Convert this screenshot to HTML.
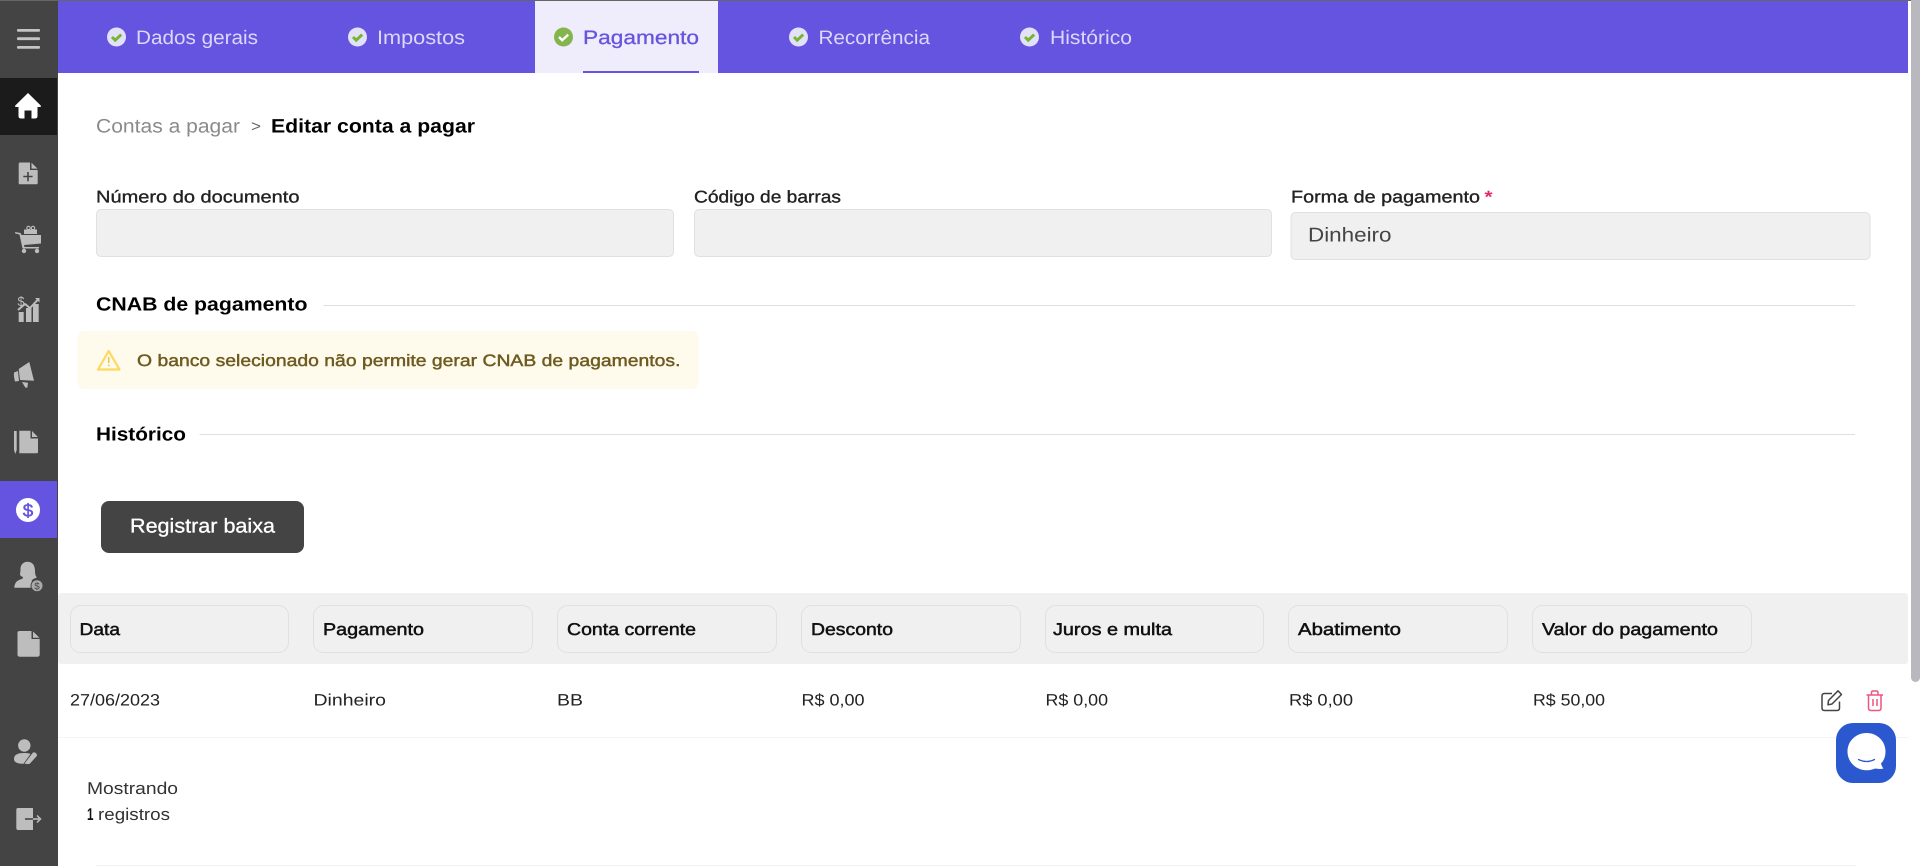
<!DOCTYPE html>
<html lang="pt-BR"><head><meta charset="utf-8"><title>Editar conta a pagar</title>
<style>
html,body{margin:0;padding:0;width:1920px;height:866px;overflow:hidden;background:#fff}
svg{display:block;position:absolute;left:0;top:0}
text{font-family:"Liberation Sans",sans-serif;text-rendering:geometricPrecision;white-space:pre}
.tab{font-size:19.5px;fill:#dcd8fa}
.lab{font-size:17px;fill:#222;stroke:#222;stroke-width:.35}
.h{font-size:19px;fill:#000;font-weight:700}
.th{font-size:17px;fill:#111;stroke:#111;stroke-width:.5}
.td{font-size:16.5px;fill:#222}
.i{fill:#bdbdbd}
</style></head><body>
<svg width="1920" height="866" viewBox="0 0 1920 866" xmlns="http://www.w3.org/2000/svg">
<rect width="1920" height="866" fill="#fff"/>
<!-- sidebar -->
<rect x="0" y="0" width="58" height="866" fill="#444"/>
<rect x="0" y="0" width="1920" height="1" fill="#666"/>
<g fill="#c4c4c4"><rect x="17" y="29" width="23" height="2.8" rx="1"/><rect x="17" y="37.3" width="23" height="2.8" rx="1"/><rect x="17" y="46" width="23" height="2.8" rx="1"/></g>
<rect x="0" y="78" width="57" height="57" fill="#1b1b1b"/>
<path fill="#fff" d="M28 93 L40.6 105.4 Q41.5 107 40 107 H37.5 V116 Q37.5 118.5 35 118.5 H31.5 V110.5 H24.5 V118.5 H21 Q18.5 118.5 18.5 116 V107 H16 Q14.5 107 15.4 105.4 Z"/>
<path class="i" d="M20 162.5 H30 V170 H37.7 V183 Q37.7 184.3 36 184.3 H20 Q18.7 184.3 18.7 183 V164 Q18.7 162.5 20 162.5 Z M31.5 162.7 L37.5 168.6 H31.5 Z"/>
<path fill="#444" d="M27.2 172 h1.6 v3.8 h3.8 v1.5 h-3.8 v3.9 h-1.6 v-3.9 h-3.9 v-1.5 h3.9 Z"/>
<path class="i" d="M15 232 L20.5 233 L21.5 235 H41 V243.5 L24 245 L24.5 247 H39 V248.5 H22.5 L19.5 234.5 L15.3 233.5 Z"/>
<rect class="i" x="24" y="229.5" width="13" height="4.5"/>
<circle cx="28.5" cy="228" r="1.7" fill="none" stroke="#bdbdbd" stroke-width="1.1"/><circle cx="33" cy="228" r="1.7" fill="none" stroke="#bdbdbd" stroke-width="1.1"/>
<circle class="i" cx="24" cy="251" r="2.2"/><circle class="i" cx="37" cy="251" r="2.2"/>
<text x="17.5" y="306" font-size="13.5" fill="#bdbdbd" textLength="7" lengthAdjust="spacingAndGlyphs">$</text>
<path fill="none" stroke="#bdbdbd" stroke-width="2" d="M18 310 L25 304 L30 308 L38.5 299"/>
<path class="i" d="M35 298 H39.5 V302.5 Z"/>
<rect class="i" x="18.7" y="312" width="5" height="10"/><rect class="i" x="26" y="308" width="5.5" height="14"/><rect class="i" x="33" y="304" width="5.7" height="18"/>
<path class="i" d="M18.7 369 L29.3 362 L34 380.7 L20 380 Z M14 372.5 L18 371 L19 381 L15 381.5 Q13.5 377 14 372.5 Z M22 382 L28 382.7 L27.3 387.7 L25.3 387.5 Z"/>
<path class="i" d="M14 431 H16.7 V450 L15.3 454 L14 450 Z"/>
<path class="i" d="M19.3 430.7 H30.5 V438.5 H38 V452 Q38 453.3 36.5 453.3 H19.3 Z M32 431 L37.8 437 H32 Z"/>
<rect x="0" y="481" width="57" height="57" fill="#6554e0"/>
<circle cx="28" cy="510" r="12" fill="#fff"/>
<text x="22.8" y="516.5" font-size="18" fill="#6554e0" stroke="#6554e0" stroke-width=".5" textLength="10.5" lengthAdjust="spacingAndGlyphs">$</text>
<path class="i" d="M27.5 561.7 C33 561.7 35 566 35 571 C35 574 35.5 576 37 577.5 C34 578.5 32 579.5 31.5 581 L33 583 C31 585 31 586.5 32 587.7 H14.3 C14.5 582 18 580 22.5 578.8 L23 577 C21 576.5 20 575.5 20 574 C20.5 572 20.5 570 20.5 568 C21 564 24 561.7 27.5 561.7 Z"/>
<circle cx="37" cy="585.7" r="6" fill="#aaa" stroke="#444" stroke-width="1"/>
<text x="34.2" y="589.5" font-size="10" fill="#444" textLength="5.5" lengthAdjust="spacingAndGlyphs">$</text>
<path class="i" d="M19.5 631 H31.5 V639 H39.7 V654.5 Q39.7 656.7 37.5 656.7 H19.5 Q17.5 656.7 17.5 654.5 V633 Q17.5 631 19.5 631 Z M33 631.5 L39.5 637.7 H33 Z"/>
<circle class="i" cx="24.3" cy="745.5" r="6.2"/>
<path class="i" d="M14 759 C14 754.5 18 753 24 753 C27 753 29 753.3 30.5 754 L23.5 763.7 C18 764 14 762.5 14 759 Z"/>
<path class="i" d="M33 752.5 C35.5 752 37.5 754 36.8 756 L30 763.5 C28.5 764.5 26 764 24.5 763.5 Z"/>
<path class="i" d="M18 808 H33 V830 H18 Q16.3 830 16.3 828 V810 Q16.3 808 18 808 Z"/>
<rect x="25" y="818.2" width="8" height="1.6" fill="#444"/><rect class="i" x="33" y="818.2" width="6" height="1.6"/>
<path fill="none" stroke="#bdbdbd" stroke-width="1.5" d="M37 815.5 L40.5 819 L37 822.5"/>

<!-- tabs -->
<rect x="58" y="1" width="1850" height="72" fill="#6554e0"/>
<rect x="535" y="1" width="183" height="72" fill="#efedfb"/>
<rect x="583" y="71" width="116" height="2" fill="#6554e0"/>
<g id="checks">
<circle cx="116.5" cy="37" r="9.5" fill="#e3e0fa"/><path d="M112 37 l3.2 3.2 l6 -5.6" fill="none" stroke="#75b52f" stroke-width="2.9"/>
<circle cx="357.5" cy="37" r="9.5" fill="#e3e0fa"/><path d="M353 37 l3.2 3.2 l6 -5.6" fill="none" stroke="#75b52f" stroke-width="2.9"/>
<circle cx="563.5" cy="37" r="9.5" fill="#84b44c"/><path d="M559 37 l3.2 3.2 l6 -5.6" fill="none" stroke="#fff" stroke-width="2.4"/>
<circle cx="798.5" cy="37" r="9.5" fill="#e3e0fa"/><path d="M794 37 l3.2 3.2 l6 -5.6" fill="none" stroke="#75b52f" stroke-width="2.9"/>
<circle cx="1029.5" cy="37" r="9.5" fill="#e3e0fa"/><path d="M1025 37 l3.2 3.2 l6 -5.6" fill="none" stroke="#75b52f" stroke-width="2.9"/>
</g>
<text class="tab" x="136" y="44" textLength="122" lengthAdjust="spacingAndGlyphs">Dados gerais</text>
<text class="tab" x="377" y="44" textLength="88" lengthAdjust="spacingAndGlyphs">Impostos</text>
<text class="tab" x="583" y="44" textLength="116" lengthAdjust="spacingAndGlyphs" style="fill:#6554e0;stroke:#6554e0;stroke-width:.3">Pagamento</text>
<text class="tab" x="818.5" y="44" textLength="111.5" lengthAdjust="spacingAndGlyphs">Recorrência</text>
<text class="tab" x="1050" y="44" textLength="82" lengthAdjust="spacingAndGlyphs">Histórico</text>

<!-- breadcrumb -->
<text x="96" y="132.5" font-size="19.5" fill="#8a8a8a" textLength="144" lengthAdjust="spacingAndGlyphs">Contas a pagar</text>
<text x="251" y="131.5" font-size="16" fill="#666" textLength="10" lengthAdjust="spacingAndGlyphs">&gt;</text>
<text x="271" y="132.5" font-size="19.5" font-weight="700" fill="#000" textLength="204" lengthAdjust="spacingAndGlyphs">Editar conta a pagar</text>

<!-- fields -->
<text class="lab" x="96" y="202.5" textLength="203.5" lengthAdjust="spacingAndGlyphs">Número do documento</text>
<rect x="96.5" y="209.5" width="577" height="47" rx="4.5" fill="#f0f0f0" stroke="#e0e0e0"/>
<text class="lab" x="694" y="202.5" textLength="147" lengthAdjust="spacingAndGlyphs">Código de barras</text>
<rect x="694.5" y="209.5" width="577" height="47" rx="4.5" fill="#f0f0f0" stroke="#e0e0e0"/>
<text class="lab" x="1291" y="202.5" textLength="189" lengthAdjust="spacingAndGlyphs">Forma de pagamento</text>
<text x="1484.5" y="202.5" font-size="17" fill="#e8245f" textLength="8" lengthAdjust="spacingAndGlyphs" font-weight="700">*</text>
<rect x="1291" y="212.5" width="579" height="47" rx="4.5" fill="#f0f0f0" stroke="#e0e0e0"/>
<text x="1308" y="241.5" font-size="20" fill="#444" textLength="83.5" lengthAdjust="spacingAndGlyphs">Dinheiro</text>

<!-- CNAB -->
<text class="h" x="96" y="310.5" textLength="211.5" lengthAdjust="spacingAndGlyphs">CNAB de pagamento</text>
<rect x="323.5" y="305" width="1531.5" height="1" fill="#dfdfdf"/>
<rect x="77.5" y="331" width="621" height="58" rx="5" fill="#fefaec"/>
<path d="M108.7 351 L119.5 369.5 H98 Z" fill="none" stroke="#fcd95f" stroke-width="2.2" stroke-linejoin="round"/>
<rect x="108" y="357" width="1.5" height="6" fill="#e8c74f"/><rect x="108" y="364.5" width="1.5" height="1.7" fill="#e8c74f"/>
<text x="137" y="366" font-size="16.5" fill="#6e5b20" stroke="#6e5b20" stroke-width=".45" textLength="543.5" lengthAdjust="spacingAndGlyphs">O banco selecionado não permite gerar CNAB de pagamentos.</text>

<!-- Historico -->
<text class="h" x="96" y="440.5" textLength="90" lengthAdjust="spacingAndGlyphs">Histórico</text>
<rect x="199.5" y="434" width="1655.5" height="1" fill="#dfdfdf"/>
<rect x="101" y="501" width="203" height="52" rx="8" fill="#444"/>
<text x="130" y="532.5" font-size="20" fill="#fff" stroke="#fff" stroke-width=".3" textLength="145" lengthAdjust="spacingAndGlyphs">Registrar baixa</text>

<!-- table -->
<rect x="58" y="593" width="1850" height="71" rx="3" fill="#f0f0f0"/>
<g fill="#f0f0f0" stroke="#e0e0e0">
<rect x="70.5" y="605.5" width="218" height="47" rx="10"/>
<rect x="313.5" y="605.5" width="219" height="47" rx="10"/>
<rect x="557.5" y="605.5" width="219" height="47" rx="10"/>
<rect x="801.5" y="605.5" width="219" height="47" rx="10"/>
<rect x="1045.5" y="605.5" width="218" height="47" rx="10"/>
<rect x="1288.5" y="605.5" width="219" height="47" rx="10"/>
<rect x="1532.5" y="605.5" width="219" height="47" rx="10"/>
</g>
<text class="th" x="79.5" y="635" textLength="40.5" lengthAdjust="spacingAndGlyphs">Data</text>
<text class="th" x="323" y="635" textLength="101" lengthAdjust="spacingAndGlyphs">Pagamento</text>
<text class="th" x="567" y="635" textLength="129" lengthAdjust="spacingAndGlyphs">Conta corrente</text>
<text class="th" x="811" y="635" textLength="82" lengthAdjust="spacingAndGlyphs">Desconto</text>
<text class="th" x="1053" y="635" textLength="119" lengthAdjust="spacingAndGlyphs">Juros e multa</text>
<text class="th" x="1298" y="635" textLength="103" lengthAdjust="spacingAndGlyphs">Abatimento</text>
<text class="th" x="1542" y="635" textLength="176" lengthAdjust="spacingAndGlyphs">Valor do pagamento</text>

<text class="td" x="70" y="705.5" textLength="90" lengthAdjust="spacingAndGlyphs">27/06/2023</text>
<text class="td" x="313.5" y="705.5" textLength="72.5" lengthAdjust="spacingAndGlyphs">Dinheiro</text>
<text class="td" x="557" y="705.5" textLength="26" lengthAdjust="spacingAndGlyphs">BB</text>
<text class="td" x="801.5" y="705.5" textLength="63" lengthAdjust="spacingAndGlyphs">R$ 0,00</text>
<text class="td" x="1045.5" y="705.5" textLength="62.5" lengthAdjust="spacingAndGlyphs">R$ 0,00</text>
<text class="td" x="1289" y="705.5" textLength="64" lengthAdjust="spacingAndGlyphs">R$ 0,00</text>
<text class="td" x="1533" y="705.5" textLength="72" lengthAdjust="spacingAndGlyphs">R$ 50,00</text>
<rect x="58" y="737" width="1850" height="1" fill="#f4f4f4"/>

<!-- edit / trash -->
<path fill="none" stroke="#444" stroke-width="1.5" stroke-linejoin="round" d="M1832 693.5 H1824.5 Q1822 693.5 1822 696 V708 Q1822 710.5 1824.5 710.5 H1837 Q1839.5 710.5 1839.5 708 V701.5"/>
<path fill="none" stroke="#444" stroke-width="1.5" stroke-linejoin="round" d="M1828.5 700.5 L1838 690.8 L1841.5 694.5 L1832 704 L1828 704.8 Z"/>
<g fill="none" stroke="#ee5580" stroke-width="1.5"><path d="M1866.5 695 H1883"/><path d="M1868.5 695 V708 Q1868.5 710.5 1871 710.5 H1878.5 Q1881 710.5 1881 708 V695"/><path d="M1871.5 695 V692.5 Q1871.5 691 1873 691 H1876.5 Q1878 691 1878 692.5 V695"/><path d="M1873 699 V706 M1877 699 V706"/></g>

<!-- chat -->
<rect x="1836" y="723" width="60" height="60" rx="17" fill="#2b57cf"/>
<path fill="#fff" d="M1866.7 733 C1877 733 1885.5 741 1885.5 751.5 C1885.5 756.5 1884 760.5 1881 763.5 C1881.5 765.5 1882.5 767.5 1883.5 768.5 C1880 769.5 1876.5 768.5 1874.5 768.7 C1872 769.7 1869.5 770.3 1866.7 770.3 C1856 770.3 1847.5 762 1847.5 751.5 C1847.5 741 1856 733 1866.7 733 Z"/>
<path fill="none" stroke="#2b57cf" stroke-width="1.3" stroke-linecap="round" d="M1858.5 759.5 Q1866.7 763.5 1874.5 759.5"/>

<!-- footer -->
<text x="87" y="794" font-size="17" fill="#333" textLength="91" lengthAdjust="spacingAndGlyphs">Mostrando</text>
<text x="87" y="820" font-size="17" font-weight="700" fill="#111" textLength="6.5" lengthAdjust="spacingAndGlyphs">1</text>
<text x="98" y="820" font-size="17" fill="#333" textLength="72" lengthAdjust="spacingAndGlyphs">registros</text>
<rect x="96" y="865" width="1760" height="1" fill="#f0f0f0"/>

<!-- scrollbar -->
<rect x="1911" y="-6" width="9" height="688" rx="4.5" fill="#b9b8bf"/>
</svg>
</body></html>
